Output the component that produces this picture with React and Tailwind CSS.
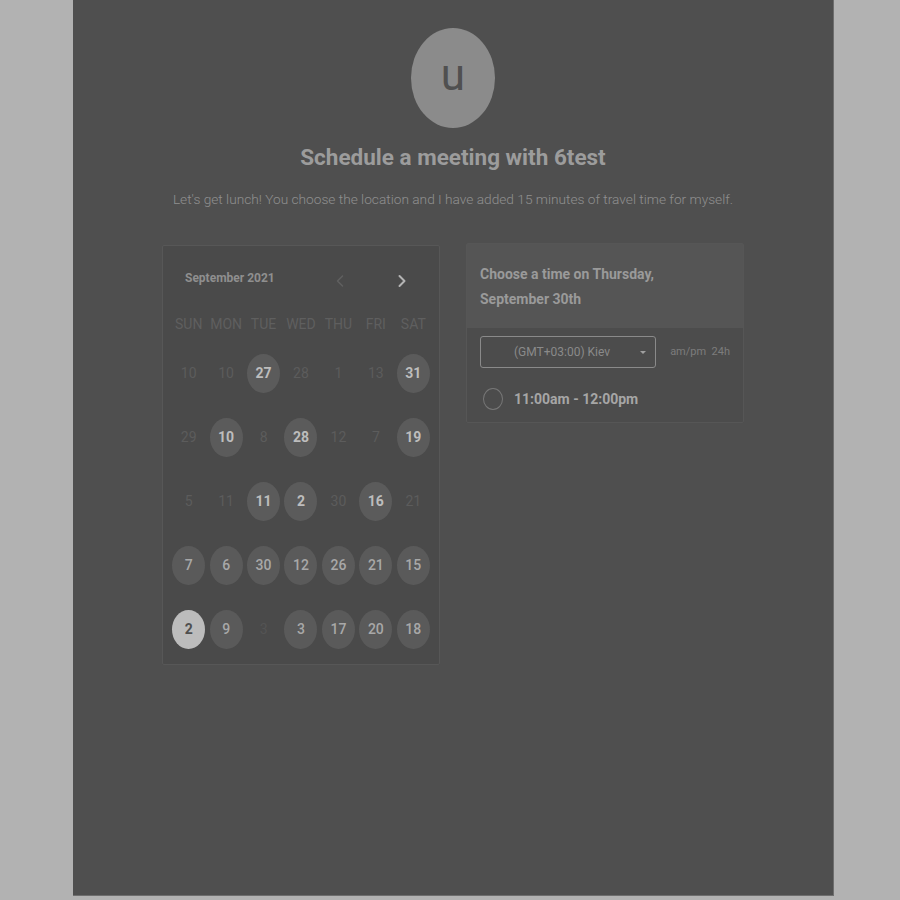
import { ChevronLeft, ChevronRight } from 'lucide-react';

const weekdays = ['SUN', 'MON', 'TUE', 'WED', 'THU', 'FRI', 'SAT'];

// kind: dim = plain faded number, on = grey bubble, sel = selected bubble, off = almost hidden
const weeks = [
  [['10', 'dim'], ['10', 'dim'], ['27', 'on'], ['28', 'dim'], ['1', 'dim'], ['13', 'dim'], ['31', 'on']],
  [['29', 'dim'], ['10', 'on'], ['8', 'dim'], ['28', 'on'], ['12', 'dim'], ['7', 'dim'], ['19', 'on']],
  [['5', 'dim'], ['11', 'dim'], ['11', 'on'], ['2', 'on'], ['30', 'dim'], ['16', 'on'], ['21', 'dim']],
  [['7', 'soft'], ['6', 'soft'], ['30', 'soft'], ['12', 'soft'], ['26', 'soft'], ['21', 'soft'], ['15', 'soft']],
  [['2', 'sel'], ['9', 'soft'], ['3', 'off'], ['3', 'soft'], ['17', 'soft'], ['20', 'soft'], ['18', 'soft']],
];

function Day({ value, kind }) {
  if (kind === 'dim' || kind === 'off') {
    return (
      <span className={`text-[14px] ${kind === 'off' ? 'text-[#545454]' : 'text-[#5c5c5c]'}`}>{value}</span>
    );
  }
  const styles = {
    on: 'bg-[#5b5b5b] text-[#bdbdbd] font-bold',
    soft: 'bg-[#5a5a5a] text-[#a8a8a8] font-medium',
    sel: 'bg-[#bcbcbc] text-[#4f4f4f] font-bold',
  };
  return (
    <span className={`w-[33px] h-[39px] rounded-[50%] flex items-center justify-center text-[14px] ${styles[kind]}`}>
      {value}
    </span>
  );
}

export default function App() {
  return (
    <div className="w-[900px] h-[900px] bg-[#b2b2b2] font-['Roboto',sans-serif]">
      <main className="ml-[73px] w-[761px] h-[896px] bg-[#4f4f4f] border-r border-b border-[#6e6e6e] flex flex-col items-center pt-[28px]">
        {/* Avatar */}
        <div className="w-[84px] h-[100px] rounded-[50%] bg-[#8b8b8b] flex items-center justify-center">
          <span className="text-[44px] leading-none text-[#505050] -mt-[6px]">u</span>
        </div>

        <h1 className="mt-[17px] text-[22.5px] leading-[24px] font-bold text-[#9c9c9c]">Schedule a meeting with 6test</h1>
        <p className="mt-[21px] text-[13.7px] leading-[18px] font-light text-[#8f8f8f]">
          Let's get lunch! You choose the location and I have added 15 minutes of travel time for myself.
        </p>

        <div className="mt-[35px] flex gap-[26px] items-start">
          {/* Calendar */}
          <section className="mt-[2px] w-[278px] bg-[#4a4a4a] border border-[#575757] rounded-[2px] px-[7px] pt-[22px] pb-[3px]">
            <div className="flex items-center h-[20px] pl-[15px] pr-[20px]">
              <span className="text-[12px] font-bold text-[#8f8f8f]">September 2021</span>
              <div className="ml-auto flex items-center gap-[42px] mt-[6px]">
                <ChevronLeft className="w-[20px] h-[20px] text-[#606060]" strokeWidth={1.8} />
                <ChevronRight className="w-[20px] h-[20px] text-[#b4b4b4]" strokeWidth={2.4} />
              </div>
            </div>

            <div className="mt-[26px] grid grid-cols-7 h-[20px] items-center">
              {weekdays.map((d) => (
                <span key={d} className="text-center text-[14px] text-[#5f5f5f]">{d}</span>
              ))}
            </div>

            <div className="mt-[7px]">
              {weeks.map((week, i) => (
                <div key={i} className="grid grid-cols-7 h-[64px] items-center">
                  {week.map(([value, kind], j) => (
                    <div key={j} className="flex justify-center">
                      <Day value={value} kind={kind} />
                    </div>
                  ))}
                </div>
              ))}
            </div>
          </section>

          {/* Time picker */}
          <section className="w-[278px] bg-[#4c4c4c] border border-[#565656] rounded-[2px]">
            <div className="bg-[#555555] h-[84px] px-[13px] pt-[18px]">
              <h2 className="text-[14px] leading-[25px] font-bold text-[#9a9a9a]">
                Choose a time on Thursday,
                <br />
                September 30th
              </h2>
            </div>
            <div className="px-[13px] pt-[8px] pb-[11px]">
              <div className="flex items-center">
                <div className="w-[177px] h-[32px] border border-[#8a8a8a] rounded-[3px] flex items-center pl-[33px] pr-[9px]">
                  <span className="text-[12px] text-[#8a8a8a]">(GMT+03:00) Kiev</span>
                  <span className="ml-auto w-0 h-0 border-l-[3px] border-r-[3px] border-t-[3px] border-l-transparent border-r-transparent border-t-[#a0a0a0]" />
                </div>
                <span className="ml-[14px] text-[11px] text-[#7c7c7c] whitespace-pre">am/pm  24h</span>
              </div>
              <div className="mt-[19px] flex items-center h-[24px]">
                <span className="ml-[3px] w-[20px] h-[22px] rounded-[50%] border border-[#777777]" />
                <span className="ml-[11px] text-[14px] font-bold text-[#a6a6a6]">11:00am - 12:00pm</span>
              </div>
            </div>
          </section>
        </div>
      </main>
    </div>
  );
}
